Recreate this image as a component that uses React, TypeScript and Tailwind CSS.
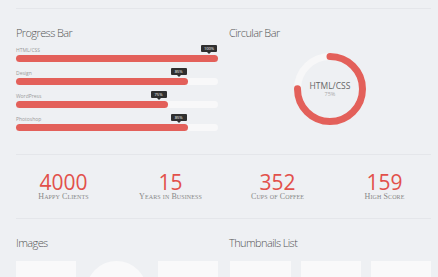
import React from "react";

const bars = [
  { label: "HTML/CSS", value: 100 },
  { label: "Design", value: 85 },
  { label: "WordPress", value: 75 },
  { label: "Photoshop", value: 85 },
];

const stats = [
  { n: "4000", l: "Happy Clients" },
  { n: "15", l: "Years in Business" },
  { n: "352", l: "Cups of Coffee" },
  { n: "159", l: "High Score" },
];

function Ring() {
  const r = 32.5;
  const c = 2 * Math.PI * r;
  return (
    <svg width="72" height="72" viewBox="0 0 72 72">
      <circle cx="36" cy="36" r={r} fill="none" stroke="#f7f7f8" strokeWidth="7" />
      <circle
        cx="36"
        cy="36"
        r={r}
        fill="none"
        stroke="#e3605a"
        strokeWidth="7"
        strokeLinecap="round"
        strokeDasharray={`${c * 0.75} ${c}`}
        transform="rotate(-90 36 36)"
      />
    </svg>
  );
}

const H = "mt-[16px] text-[11px] leading-[16px] font-light text-[#555] tracking-[-0.6px]";

export default function App() {
  return (
    <div
      className="w-[438px] h-[277px] overflow-hidden bg-[#eef0f3] pl-4 pr-[7px] pt-2"
      style={{ fontFamily: '"Open Sans", "Liberation Sans", sans-serif' }}
    >
      <div className="h-px bg-[#e4e6ea]" />
      <div className="flex gap-[11px] h-[145px]">
        <div className="w-[202px]">
          <h2 className={H}>Progress Bar</h2>
          <div className="mt-[6px] flex flex-col gap-[8px]">
            {bars.map((b) => (
              <div key={b.label}>
                <div className="text-[5px] leading-[6px] text-[#9a9a9a]">{b.label}</div>
                <div className="mt-[2px] h-[7px] rounded-full bg-[#f8f8f9]">
                  <div
                    className="relative h-[7px] rounded-full bg-[#e3605a]"
                    style={{ width: `${b.value}%` }}
                  >
                    <div className="absolute right-[1px] bottom-[10px] h-[7px] w-[16px] rounded-[1px] bg-[#2f2f2f] flex items-center justify-center text-[4px] leading-[4px] text-white">
                      {b.value}%
                      <div className="absolute left-1/2 -translate-x-1/2 top-[7px] w-0 h-0 border-l-[2px] border-r-[2px] border-t-[2px] border-l-transparent border-r-transparent border-t-[#2f2f2f]" />
                    </div>
                  </div>
                </div>
              </div>
            ))}
          </div>
        </div>
        <div className="w-[202px]">
          <h2 className={H}>Circular Bar</h2>
          <div className="mt-[12px] flex justify-center">
            <div className="relative w-[72px] h-[72px]">
              <Ring />
              <div className="absolute inset-0 flex flex-col items-center justify-center">
                <div className="text-[8.5px] leading-[10px] text-[#666]">HTML/CSS</div>
                <div className="text-[5.5px] leading-[7px] text-[#aaa]">75%</div>
              </div>
            </div>
          </div>
        </div>
      </div>
      <div className="h-px bg-[#e4e6ea]" />
      <div className="h-[63px] ml-[-6px] grid grid-cols-[107px_107px_107px_107px]">
        {stats.map((s) => (
          <div key={s.n} className="flex flex-col items-center">
            <div className="mt-[17px] text-[21px] leading-[20px] text-[#e2504b]">{s.n}</div>
            <div
              className="text-[8px] leading-[9px] text-[#888] tracking-[0.1px]"
              style={{ fontFamily: '"Liberation Serif", serif', fontVariant: "small-caps" }}
            >
              {s.l}
            </div>
          </div>
        ))}
      </div>
      <div className="h-px bg-[#e4e6ea]" />
      <div className="flex gap-[11px]">
        <div className="w-[202px]">
          <h2 className={H}>Images</h2>
          <div className="mt-[10px] flex gap-[11px]">
            <div className="w-[60px] h-[60px] bg-[#f9f9fa]" />
            <div className="w-[62px] h-[62px] -ml-[1px] rounded-full bg-[#f9f9fa]" />
            <div className="w-[60px] h-[60px] bg-[#f9f9fa]" />
          </div>
        </div>
        <div className="w-[202px]">
          <h2 className={H}>Thumbnails List</h2>
          <div className="mt-[10px] flex gap-[10px] pl-[1px]">
            <div className="w-[61px] h-[60px] bg-[#f9f9fa]" />
            <div className="w-[61px] h-[60px] bg-[#f9f9fa]" />
            <div className="w-[60px] h-[60px] bg-[#f9f9fa]" />
          </div>
        </div>
      </div>
    </div>
  );
}
